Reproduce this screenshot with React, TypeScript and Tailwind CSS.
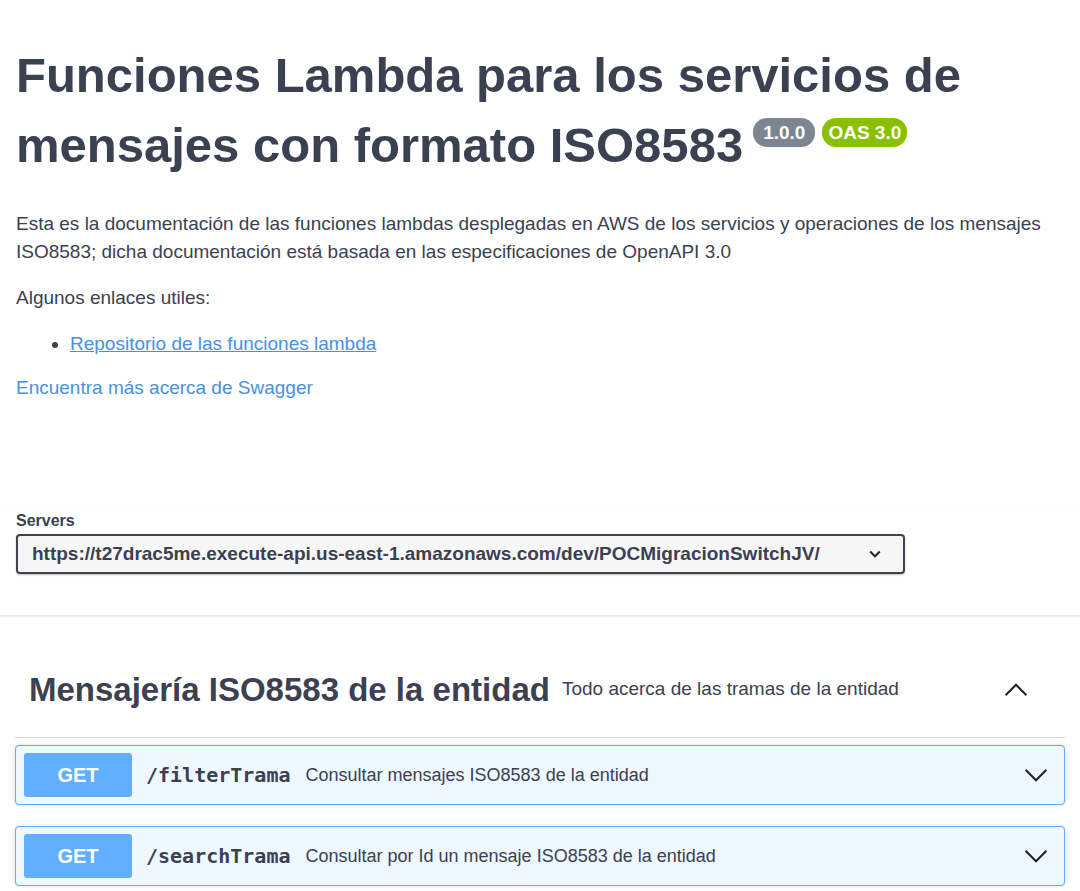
import React from 'react';

const sans = { fontFamily: '"Liberation Sans", Arial, sans-serif' };

interface Operation {
  method: string;
  path: string;
  summary: string;
}

const operations: Operation[] = [
  { method: 'GET', path: '/filterTrama', summary: 'Consultar mensajes ISO8583 de la entidad' },
  { method: 'GET', path: '/searchTrama', summary: 'Consultar por Id un mensaje ISO8583 de la entidad' },
];

const ChevronDown: React.FC<{ className?: string }> = ({ className }) => (
  <svg viewBox="0 0 20 20" className={className} fill="none" stroke="currentColor" strokeWidth="1.6">
    <path d="M2 6l8 8 8-8" />
  </svg>
);

const ChevronUp: React.FC<{ className?: string }> = ({ className }) => (
  <svg viewBox="0 0 20 20" className={className} fill="none" stroke="currentColor" strokeWidth="1.6">
    <path d="M2 14l8-8 8 8" />
  </svg>
);

const OperationRow: React.FC<{ op: Operation }> = ({ op }) => (
  <div className="flex h-[60px] items-center rounded-[4px] border border-[#61affe] bg-[#eff7ff] pl-[8px] pr-[15px] shadow-[0_0_3px_rgba(0,0,0,0.19)]">
    <span className="flex h-[44px] w-[108px] items-center justify-center rounded-[3px] bg-[#61affe] text-[20px] font-bold text-white">
      {op.method}
    </span>
    <span
      className="ml-[14px] text-[20px] font-bold text-[#3b4151]"
      style={{ fontFamily: '"DejaVu Sans Mono", "Liberation Mono", monospace' }}
    >
      {op.path}
    </span>
    <span className="ml-[15px] flex-1 text-[18px] text-[#3b4151]">{op.summary}</span>
    <ChevronDown className="h-[26px] w-[26px] text-[#222]" />
  </div>
);

export default function App() {
  return (
    <div className="min-h-[891px] w-[1080px] overflow-hidden bg-white text-[#3b4151]" style={sans}>
      {/* Info */}
      <div className="px-[16px] pt-[40px]">
        <h2 className="text-[49px] font-bold leading-[70px] text-[#3b4151]">
          Funciones Lambda para los servicios de mensajes con formato ISO8583
          <span className="ml-[10px] mt-[8px] inline-flex gap-[7px] align-top">
            <span className="rounded-[14px] bg-[#7d8492] px-[10px] text-[19px] leading-[29px] font-bold text-white">
              1.0.0
            </span>
            <span className="rounded-[14px] bg-[#89bf04] px-[6px] text-[19px] leading-[29px] font-bold text-white">
              OAS 3.0
            </span>
          </span>
        </h2>

        <div className="mt-[30px] text-[19px] leading-[28px]">
          <p>
            Esta es la documentación de las funciones lambdas desplegadas en AWS de los servicios y operaciones de los
            mensajes ISO8583; dicha documentación está basada en las especificaciones de OpenAPI 3.0
          </p>
          <p className="mt-[18px]">Algunos enlaces utiles:</p>
          <ul className="mt-[18px] list-disc pl-[54px]">
            <li>
              <a className="text-[#4990e2] underline">Repositorio de las funciones lambda</a>
            </li>
          </ul>
          <p className="mt-[16px]">
            <a className="text-[#4990e2]">Encuentra más acerca de Swagger</a>
          </p>
        </div>
      </div>

      {/* Servers */}
      <div className="mt-[110px] bg-white px-[16px] pb-[41px] shadow-[0_1px_2px_0_rgba(0,0,0,0.15)]">
        <div className="text-[16px] font-bold leading-[18px]">Servers</div>
        <div className="mt-[4px] flex h-[40px] w-[889px] items-center justify-between rounded-[4px] border-2 border-[#41444e] bg-[#f7f7f7] pl-[14px] pr-[20px] shadow-[0_1px_2px_0_rgba(0,0,0,0.25)]">
          <span className="text-[19px] font-bold">
            https://t27drac5me.execute-api.us-east-1.amazonaws.com/dev/POCMigracionSwitchJV/
          </span>
          <svg viewBox="0 0 20 20" className="h-[16px] w-[16px]" fill="none" stroke="#222" strokeWidth="2.6">
            <path d="M4 7l6 6 6-6" />
          </svg>
        </div>
      </div>

      {/* Tag */}
      <div className="px-[15px] pt-[27px]">
        <div className="flex h-[96px] items-center border-b border-[#d8dadc] pl-[14px] pr-[36px]">
          <h3 className="text-[33px] font-bold">Mensajería ISO8583 de la entidad</h3>
          <span className="ml-[12px] flex-1 text-[19px]">Todo acerca de las tramas de la entidad</span>
          <ChevronUp className="h-[26px] w-[26px] text-[#222]" />
        </div>
        <div className="mt-[7px] flex flex-col gap-[21px]">
          {operations.map((op) => (
            <OperationRow key={op.path} op={op} />
          ))}
        </div>
      </div>
    </div>
  );
}
